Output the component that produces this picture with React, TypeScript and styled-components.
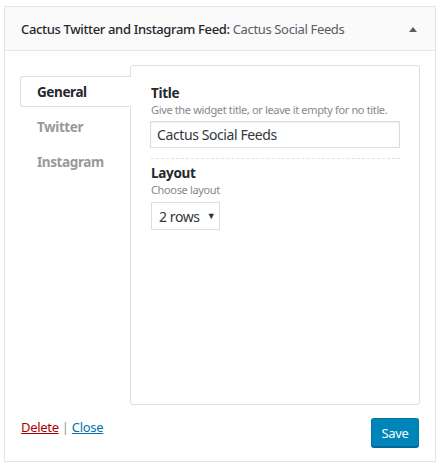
import React from "react";
import styled, { createGlobalStyle } from "styled-components";

const Global = createGlobalStyle`
  html, body { margin: 0; padding: 0; background: #fff; }
  body { font-family: "Noto Sans", "Open Sans", sans-serif; color: #444; }
  * { box-sizing: border-box; }
`;

const Widget = styled.div`
  margin: 6px 4px 0 4px;
  width: 432px;
  height: 456px;
  border: 1px solid #e5e5e5;
  box-shadow: 0 1px 1px rgba(0, 0, 0, 0.04);
  background: #fff;
  display: flex;
  flex-direction: column;
`;

const Header = styled.div`
  height: 44px;
  flex: none;
  background: #fafafa;
  border-bottom: 1px solid #e5e5e5;
  display: flex;
  align-items: center;
  justify-content: space-between;
  padding: 1px 18px 0 16px;
`;

const HeaderTitle = styled.h3`
  margin: 0;
  font-size: 13px;
  font-weight: 500;
  color: #23282d;
  letter-spacing: -0.35px;
`;

const InTitle = styled.span`
  font-weight: 400;
  color: #555d66;
`;

const Arrow = styled.span`
  width: 0;
  height: 0;
  border-left: 4px solid transparent;
  border-right: 4px solid transparent;
  border-bottom: 5px solid #555d66;
`;

const Body = styled.div`
  flex: 1;
  display: flex;
  flex-direction: column;
  padding: 14px 16px 14px 15px;
`;

const TabsArea = styled.div`
  display: flex;
  align-items: flex-start;
`;

const TabList = styled.ul`
  list-style: none;
  margin: 11px -1px 0 0;
  padding: 0;
  width: 111px;
  flex: none;
  position: relative;
  z-index: 1;
`;

const Tab = styled.li<{ $active?: boolean }>`
  height: ${(p) => (p.$active ? "31px" : "35px")};
  margin-bottom: ${(p) => (p.$active ? "2px" : "0")};
  display: flex;
  align-items: center;
  padding-left: 16px;
  font-size: 13.5px;
  font-weight: 700;
  color: ${(p) => (p.$active ? "#23282d" : "#999")};
  background: ${(p) => (p.$active ? "#fff" : "transparent")};
  border: ${(p) => (p.$active ? "1px solid #ddd" : "1px solid transparent")};
  border-right: none;
  border-radius: 3px 0 0 3px;
  letter-spacing: -0.4px;
`;

const Panel = styled.div`
  flex: 1;
  height: 340px;
  border: 1px solid #ddd;
  border-radius: 3px;
  padding: 18px 19px 0 20px;
`;

const Field = styled.div<{ $divider?: boolean }>`
  padding-bottom: ${(p) => (p.$divider ? "10px" : "0")};
  margin-bottom: ${(p) => (p.$divider ? "5px" : "0")};
  border-bottom: ${(p) => (p.$divider ? "1px dashed #e1e1e1" : "none")};
`;

const Label = styled.div`
  font-size: 13.5px;
  font-weight: 700;
  color: #23282d;
  line-height: 18px;
  letter-spacing: -0.3px;
`;

const Desc = styled.div`
  font-size: 11px;
  color: #888;
  line-height: 15px;
  margin-bottom: 4px;
  letter-spacing: -0.35px;
  white-space: nowrap;
`;

const TextInput = styled.input`
  display: block;
  width: 250px;
  height: 27px;
  margin-left: -1px;
  border: 1px solid #ddd;
  box-shadow: inset 0 1px 2px rgba(0, 0, 0, 0.07);
  padding: 0 6px;
  font-family: inherit;
  font-size: 14px;
  color: #32373c;
  letter-spacing: -0.4px;
  outline: none;
`;

const SelectBox = styled.div`
  display: inline-flex;
  align-items: center;
  gap: 7px;
  height: 28px;
  width: 69px;
  border: 1px solid #ddd;
  padding: 0 0 0 7px;
  margin-top: 1px;
  font-size: 14px;
  color: #32373c;
  letter-spacing: -0.4px;
`;

const Caret = styled.span`
  font-size: 9px;
  color: #333;
  margin-top: -2px;
`;

const Footer = styled.div`
  margin-top: 13px;
  display: flex;
  justify-content: space-between;
  align-items: flex-start;
`;

const Links = styled.div`
  padding-left: 1px;
  font-size: 13px;
  color: #999;
  line-height: 18px;
  letter-spacing: -0.3px;
`;

const Link = styled.a<{ $danger?: boolean }>`
  color: ${(p) => (p.$danger ? "#a00" : "#0073aa")};
  text-decoration: underline;
  cursor: pointer;
`;

const SaveButton = styled.button`
  height: 29px;
  width: 48px;
  background: #0085ba;
  border: 1px solid #0073aa;
  border-bottom-color: #006799;
  box-shadow: 0 1px 0 #006799;
  border-radius: 3px;
  color: #fff;
  font-family: inherit;
  font-size: 13px;
  padding: 0;
  letter-spacing: -0.3px;
`;

export default function App() {
  return (
    <>
      <Global />
      <Widget>
        <Header>
          <HeaderTitle>
            Cactus Twitter and Instagram Feed: <InTitle>Cactus Social Feeds</InTitle>
          </HeaderTitle>
          <Arrow />
        </Header>
        <Body>
          <TabsArea>
            <TabList>
              <Tab $active>General</Tab>
              <Tab>Twitter</Tab>
              <Tab>Instagram</Tab>
            </TabList>
            <Panel>
              <Field $divider>
                <Label>Title</Label>
                <Desc>Give the widget title, or leave it empty for no title.</Desc>
                <TextInput defaultValue="Cactus Social Feeds" />
              </Field>
              <Field>
                <Label>Layout</Label>
                <Desc>Choose layout</Desc>
                <SelectBox>
                  2 rows <Caret>▼</Caret>
                </SelectBox>
              </Field>
            </Panel>
          </TabsArea>
          <Footer>
            <Links>
              <Link $danger>Delete</Link> | <Link>Close</Link>
            </Links>
            <SaveButton>Save</SaveButton>
          </Footer>
        </Body>
      </Widget>
    </>
  );
}
